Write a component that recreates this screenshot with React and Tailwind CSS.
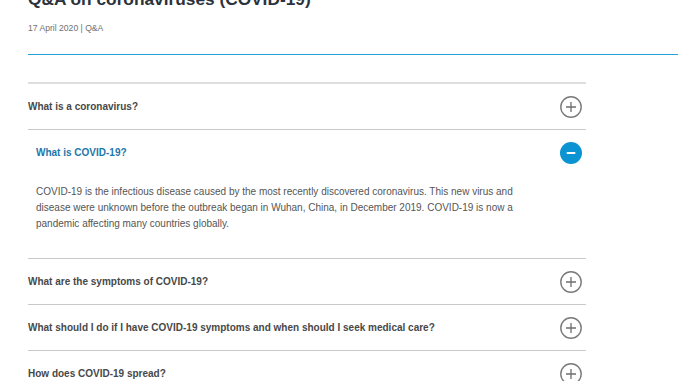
import React from 'react';

const questions = [
  { q: 'What is a coronavirus?' },
  {
    q: 'What is COVID-19?',
    open: true,
    a: 'COVID-19 is the infectious disease caused by the most recently discovered coronavirus. This new virus and disease were unknown before the outbreak began in Wuhan, China, in December 2019. COVID-19 is now a pandemic affecting many countries globally.',
  },
  { q: 'What are the symptoms of COVID-19?' },
  { q: 'What should I do if I have COVID-19 symptoms and when should I seek medical care?' },
  { q: 'How does COVID-19 spread?' },
];

function PlusIcon() {
  return (
    <svg width="22" height="22" viewBox="0 0 22 22" className="shrink-0">
      <circle cx="11" cy="11" r="10.2" fill="none" stroke="#7a7a7a" strokeWidth="1.4" />
      <path d="M6 11h10M11 6v10" stroke="#6e6e6e" strokeWidth="1.3" />
    </svg>
  );
}

function MinusIcon() {
  return (
    <svg width="22" height="22" viewBox="0 0 22 22" className="shrink-0">
      <circle cx="11" cy="11" r="11" fill="#0b93d2" />
      <rect x="6.5" y="9.9" width="9" height="2.2" rx="1" fill="#ffffff" />
    </svg>
  );
}

export default function App() {
  return (
    <div className="min-h-screen bg-white overflow-hidden" style={{ fontFamily: '"Liberation Sans", Arial, sans-serif' }}>
      <div className="pl-[28px]">
        <h1 className="mt-[-11px] text-[17.3px] leading-[20px] font-bold text-[#2b323c]">
          Q&amp;A on coronaviruses (COVID-19)
        </h1>
        <p className="mt-[13px] text-[8.6px] leading-[12px] text-[#707070]">17 April 2020 | Q&amp;A</p>
        <div className="mt-[20px] h-px bg-[#28a1d9]"></div>

        <div className="mt-[27px] w-[558px] border-t-2 border-[#dedede]">
          {questions.map((item) => (
            <div key={item.q} className="border-b border-[#c9c9c9]">
              <div className={`h-[45px] flex items-center justify-between pr-[4px] ${item.open ? 'pl-[8px]' : ''}`}>
                <span
                  className={`text-[10px] font-bold ${item.open ? 'text-[#1d77aa]' : 'text-[#484848]'}`}
                >
                  {item.q}
                </span>
                {item.open ? <MinusIcon /> : <PlusIcon />}
              </div>
              {item.open && (
                <p className="pl-[8px] mt-[9px] pb-[26px] w-[510px] text-[10px] leading-[16px] text-[#555555]">
                  {item.a}
                </p>
              )}
            </div>
          ))}
        </div>
      </div>
    </div>
  );
}
